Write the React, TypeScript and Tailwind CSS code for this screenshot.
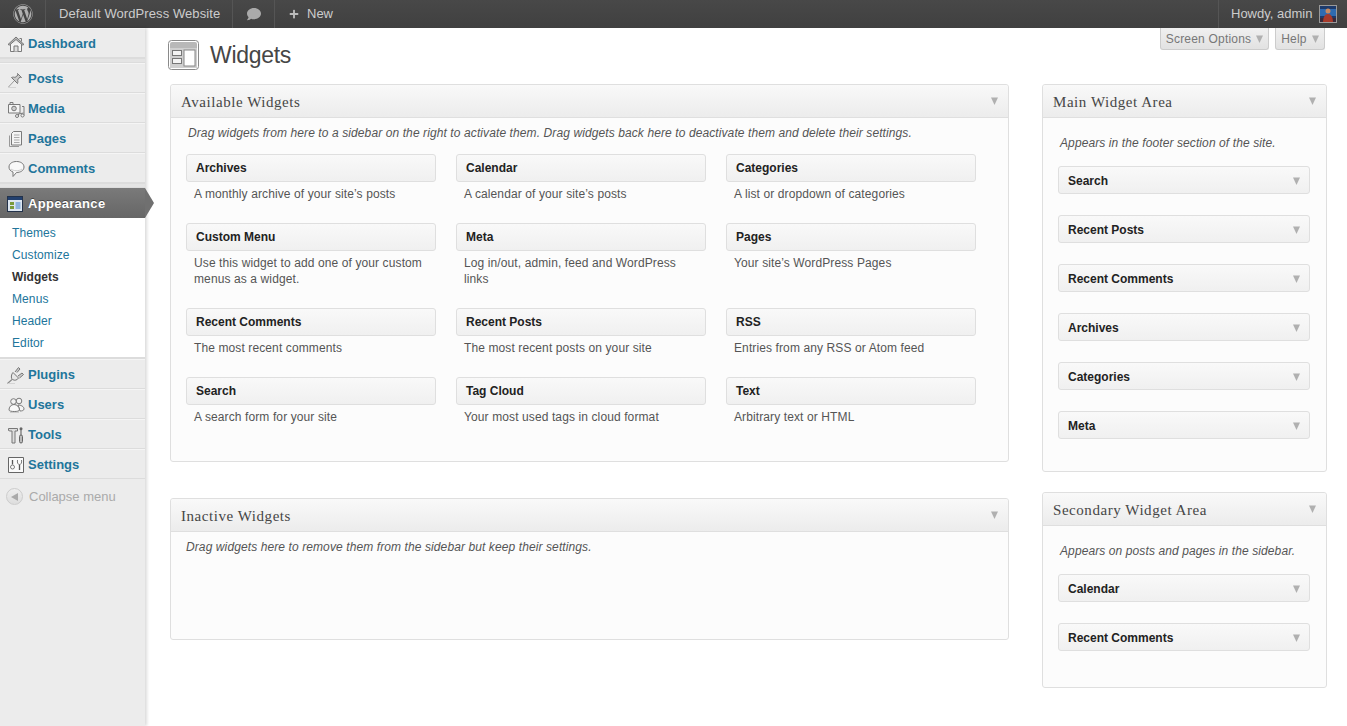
import React from "react";
import { FaWordpress, FaComment, FaPlus } from "react-icons/fa";

const S = { fill: "none", stroke: "#7a7a7a", strokeWidth: 1 } as const;
const F = { fill: "#f4f4f4", stroke: "#7a7a7a", strokeWidth: 1 } as const;
const Icon = ({ children }: { children: React.ReactNode }) => (
  <svg width="18" height="18" viewBox="0 0 18 18" className="shrink-0">{children}</svg>
);
const icons: Record<string, React.ReactNode> = {
  Dashboard: (<Icon>
    <path d="M3.500 8.500v8h11v-8" {...F} />
    <path d="M1 9.500 9 2l8 7.500-1.500 .5L9 4.500 2.500 10z" fill="#b5b5b5" stroke="#777" />
    <path d="M12.500 3.500h2v3" {...S} />
    <path d="M7 16.500V11h4v5.500" fill="#ddd" stroke="#777" />
  </Icon>),
  Posts: (<Icon>
    <path d="M1.500 17 7.500 10.500" stroke="#999" fill="none" />
    <path d="M4.500 7.500l6 6c.5-1.500.5-2.500 0-3.500l2.500-3 1.500.5-4-4 .5 1.500-3 2.500c-1-.5-2-.5-3.500 0z" fill="#c8c8c8" stroke="#777" />
    <path d="M1 17.500h8" stroke="#d4d4d4" fill="none" />
  </Icon>),
  Media: (<Icon>
    <path d="M1.500 4.500h11.500v8.500H1.500z" {...F} />
    <path d="M3 4.500v-2h3v2" {...S} />
    <circle cx="7" cy="8.500" r="2.300" fill="#ccc" stroke="#777" />
    <path d="M15 6.500h2v9M11.500 17v-3l5-1" {...S} />
    <circle cx="10" cy="16" r="1.500" {...F} />
    <circle cx="15.500" cy="15.500" r="1.500" {...F} />
  </Icon>),
  Pages: (<Icon>
    <path d="M2.500 5.500v11h9.500" fill="none" stroke="#999" />
    <path d="M4.500 3.500v11.500h10V1.500H6.500z" {...F} />
    <path d="M7 5h5.500M7 7.500h5.500M7 10h5.500M7 12.500h5.500" stroke="#aaa" fill="none" />
  </Icon>),
  Comments: (<Icon>
    <path d="M9.500 1.500c4 0 7.500 2 7.500 5.500s-3.500 5.500-7.500 5.500L6 16.500V12C3.500 11 2 9.500 2 7c0-3.500 3.500-5.500 7.500-5.500z" fill="#f8f8f8" stroke="#777" />
    <path d="M4 9c2 2 8 2.500 11 0" stroke="#ccc" fill="none" />
  </Icon>),
  Plugins: (<Icon>
    <path d="M.5 17.500l4.500-4" stroke="#888" fill="none" strokeWidth="1.200" />
    <path d="M6 6.500l5.500 5.500c-1 2-4 3-6 1.500S4.500 8 6 6.500z" fill="#e8e8e8" stroke="#777" />
    <path d="M8 6l3.500-4.500 1.500 1.500-3 3.500M11 10l4-3 1.500 1.500-4 3.500" fill="#ccc" stroke="#777" />
    <path d="M1 17.500h7" stroke="#d4d4d4" fill="none" />
  </Icon>),
  Users: (<Icon>
    <circle cx="6.500" cy="5.500" r="2.800" {...F} />
    <circle cx="12" cy="5" r="2.800" {...F} />
    <path d="M11 9c3 0 6 1.500 6 4 0 1.500-2 2-4 2z" {...F} />
    <path d="M2 14c0-3 2-5.500 5-5.500s5.500 2.500 5.500 5.500c0 2-10.500 2-10.500 0z" fill="#fafafa" stroke="#777" />
    <path d="M3 16.500h9" stroke="#ccc" fill="none" />
  </Icon>),
  Tools: (<Icon>
    <path d="M1.500 2.500h9v2.500h-2.500v12h-3V5H3L1.500 4.500z" fill="#ddd" stroke="#777" />
    <rect x="12.500" y="9" width="3" height="8" rx="1.500" fill="#bbb" stroke="#666" />
    <path d="M14 9V4" stroke="#777" strokeWidth="1.300" fill="none" />
    <circle cx="14" cy="2.800" r="1.500" fill="#666" />
  </Icon>),
  Settings: (<Icon>
    <path d="M1.500 1.500h15v15h-15z" fill="#fafafa" stroke="#666" />
    <path d="M5.500 4v4.500M12.500 8.500v5.500" stroke="#555" strokeWidth="1.300" fill="none" />
    <circle cx="5.500" cy="11" r="2" {...S} />
    <path d="M10.500 4c-.5 3 .5 4.500 2 4.500s2.500-1.500 2-4.500" {...S} />
  </Icon>),
};

const Caret = ({ className = "" }: { className?: string }) => (
  <svg width="7" height="8" viewBox="0 0 7 8" className={`shrink-0 ${className}`}>
    <path d="M0 .5h7L3.500 8z" fill="#b0b0b0" />
  </svg>
);

const MenuRow = ({ name }: { name: string }) => (
  <a className="flex h-[30px] items-center gap-[3px] border-t border-t-[#f5f5f5] border-b border-b-[#dcdcdc] pl-[7px] pt-[2px] text-[13px] font-bold text-[#21759b]">
    {icons[name]}
    <span>{name}</span>
  </a>
);

const MenuSep = () => <div className="h-[5px] border-y border-[#dcdcdc] bg-[#e4e4e4]" />;

const SideNav = () => (
  <aside className="w-[145px] shrink-0 bg-[#ececec] shadow-[2px_0_3px_rgba(0,0,0,0.14)]">
    <MenuRow name="Dashboard" />
    <MenuSep />
    {["Posts", "Media", "Pages", "Comments"].map((n) => <MenuRow key={n} name={n} />)}
    <MenuSep />
    <div className="relative flex h-[30px] items-center gap-[5px] bg-gradient-to-b from-[#7a7a7a] to-[#666] pl-[7px] pt-[2px] text-[13px] font-bold tracking-[0.3px] text-white [text-shadow:0_-1px_0_rgba(0,0,0,0.4)]">
      <svg width="16" height="16" viewBox="0 0 16 16" className="shrink-0">
        <rect x=".5" y=".5" width="15" height="15" fill="#dde6f0" stroke="#23324a" />
        <rect x="1" y="1" width="14" height="3" fill="#23406e" />
        <rect x="3" y="6" width="4" height="3" fill="#7a9a3a" />
        <rect x="3" y="10" width="4" height="3" fill="#7a9a3a" />
        <rect x="8.500" y="6" width="5" height="7" fill="#8fb3dd" />
      </svg>
      <span>Appearance</span>
      <div className="absolute left-full top-0 h-[30px] w-[9px] bg-[#707070] [clip-path:polygon(0_0,100%_50%,0_100%)]" />
    </div>
    <div className="h-[140px] border-b border-[#dcdcdc] bg-white pt-[4px] text-[12px] leading-[22px] tracking-[0.1px] text-[#21759b]">
      {["Themes", "Customize", "Widgets", "Menus", "Header", "Editor"].map((n) => (
        <div key={n} className={`pl-[12px] ${n === "Widgets" ? "font-bold tracking-normal text-[#333]" : ""}`}>{n}</div>
      ))}
    </div>
    <div className="border-t border-[#dcdcdc]">
      {["Plugins", "Users", "Tools", "Settings"].map((n) => <MenuRow key={n} name={n} />)}
    </div>
    <div className="mt-[8px] flex items-center gap-[6px] pl-[6px] text-[13px] text-[#aaa]">
      <span className="flex h-[17px] w-[17px] items-center justify-center rounded-full border border-[#ccc] bg-gradient-to-b from-[#eee] to-[#ddd]">
        <svg width="7" height="8" viewBox="0 0 7 8"><path d="M7 0v8L0 4z" fill="#aaa" /></svg>
      </span>
      <span>Collapse menu</span>
    </div>
  </aside>
);

const TopBar = () => (
  <header className="flex h-[28px] items-center bg-gradient-to-b from-[#484848] to-[#404040] text-[13px] text-[#cccccc]">
    <div className="flex h-full w-[46px] items-center justify-center border-r border-[#555]">
      <FaWordpress size={20} color="#b0b0b0" />
    </div>
    <div className="flex h-full w-[187px] items-center border-r border-[#555] pl-[13px] tracking-[0.08px]">Default WordPress Website</div>
    <div className="flex h-full w-[42px] items-center justify-center border-r border-[#555]">
      <FaComment size={14} color="#aaa" />
    </div>
    <div className="flex h-full items-center gap-[8px] pl-[14px]">
      <FaPlus size={10} color="#bbb" />
      <span>New</span>
    </div>
    <div className="ml-auto flex h-full w-[129px] items-center gap-[6px] border-l border-[#555] pl-[12px]">
      <span>Howdy, admin</span>
      <svg width="18" height="18" viewBox="0 0 18 18" className="ml-[1px] shrink-0">
        <rect width="18" height="18" fill="#1d3a6b" />
        <rect y="4" width="18" height="7" fill="#2f6bb0" />
        <rect y="13" width="18" height="5" fill="#3a2a3a" />
        <circle cx="9" cy="6" r="2.500" fill="#c98a60" />
        <path d="M4 18c0-6 2-9 5-9s5 3 5 9z" fill="#a83a2a" />
        <rect x=".5" y=".5" width="17" height="17" fill="none" stroke="#999" />
      </svg>
    </div>
  </header>
);

const Tab = ({ label, w }: { label: string; w: string }) => (
  <div className={`flex h-[22px] ${w} items-center justify-center gap-[5px] rounded-b-[3px] border border-t-0 border-[#ccc] bg-gradient-to-b from-[#f0f0f0] to-[#e2e2e2] text-[12px] tracking-[0.2px] text-[#777]`}>
    <span>{label}</span>
    <Caret />
  </div>
);

const PanelHead = ({ title, px }: { title: string; px: string }) => (
  <div className={`flex h-[33px] items-center justify-between rounded-t-[3px] border-b border-[#dfdfdf] bg-gradient-to-b from-[#f9f9f9] to-[#ececec] ${px} font-['Liberation_Serif',serif] text-[15px] tracking-[0.55px] text-[#464646]`}>
    <span className="pt-[2px]">{title}</span>
    <Caret />
  </div>
);

const Desc = ({ children, className }: { children: React.ReactNode; className: string }) => (
  <p className={`text-[12px] italic leading-[16px] tracking-[0.1px] text-[#555] ${className}`}>{children}</p>
);

const available = [
  ["Archives", "A monthly archive of your site\u2019s posts"],
  ["Calendar", "A calendar of your site\u2019s posts"],
  ["Categories", "A list or dropdown of categories"],
  ["Custom Menu", "Use this widget to add one of your custom menus as a widget."],
  ["Meta", "Log in/out, admin, feed and WordPress links"],
  ["Pages", "Your site\u2019s WordPress Pages"],
  ["Recent Comments", "The most recent comments"],
  ["Recent Posts", "The most recent posts on your site"],
  ["RSS", "Entries from any RSS or Atom feed"],
  ["Search", "A search form for your site"],
  ["Tag Cloud", "Your most used tags in cloud format"],
  ["Text", "Arbitrary text or HTML"],
];

const WidgetBar = ({ title, caret }: { title: string; caret?: boolean }) => (
  <div className={`flex h-[28px] items-center justify-between rounded-[3px] border border-[#dfdfdf] bg-gradient-to-b from-[#f9f9f9] to-[#f0f0f0] pl-[9px] pr-[9px] text-[12px] font-bold text-[#222] ${caret ? "pt-[2px]" : ""}`}>
    <span>{title}</span>
    {caret && <Caret />}
  </div>
);

const Sidebar = ({ title, desc, items, className }: { title: string; desc: string; items: string[]; className: string }) => (
  <section className={`rounded-[3px] border border-[#dfdfdf] bg-[#fcfcfc] ${className}`}>
    <PanelHead title={title} px="pl-[10px] pr-[10px]" />
    <Desc className="pl-[17px] pt-[17px]">{desc}</Desc>
    <div className="flex flex-col gap-[21px] pl-[15px] pr-[16px] pt-[15px]">
      {items.map((t) => <WidgetBar key={t} title={t} caret />)}
    </div>
  </section>
);

export default function App() {
  return (
    <div className="flex min-h-[726px] flex-col overflow-hidden bg-white font-['Liberation_Sans',Arial,sans-serif]">
      <TopBar />
      <div className="flex flex-1">
        <SideNav />
        <main className="min-w-0 flex-1 pl-[25px] pr-[20px]">
          <div className="flex h-[56px] items-start justify-between">
            <div className="ml-[-2px] mt-[12px] flex items-center gap-[10px]">
              <svg width="32" height="32" viewBox="0 0 32 32" className="shrink-0">
                <rect x=".5" y=".5" width="30" height="29" rx="3" fill="#fff" stroke="#8a8a8a" />
                <path d="M2 8V4Q2 2 4 2h23Q29 2 29 4v4z" fill="#b8b8b8" />
                <rect x="2" y="8" width="27" height="20" fill="#cfcfcf" />
                <rect x="4.500" y="10.500" width="9" height="5" fill="#f4f4f4" stroke="#777" />
                <rect x="4.500" y="18.500" width="9" height="5" fill="#f4f4f4" stroke="#777" />
                <rect x="16" y="10" width="11" height="16" fill="#fff" stroke="#888" />
              </svg>
              <h1 className="mt-[-2px] text-[23px] leading-[29px] tracking-[-0.3px] text-[#464646]">Widgets</h1>
            </div>
            <div className="mr-[2px] flex gap-[6px]">
              <Tab label="Screen Options" w="w-[109px]" />
              <Tab label="Help" w="w-[50px]" />
            </div>
          </div>
          <div className="flex items-start gap-[33px]">
            <div className="flex w-[839px] shrink-0 flex-col gap-[36px]">
              <section className="rounded-[3px] border border-[#dfdfdf] bg-[#fcfcfc]">
                <PanelHead title="Available Widgets" px="pl-[10px] pr-[10px]" />
                <Desc className="pl-[17px] pt-[7px]">Drag widgets from here to a sidebar on the right to activate them. Drag widgets back here to deactivate them and delete their settings.</Desc>
                <div className="grid grid-cols-[250px_250px_250px] gap-x-[20px] pb-[15px] pl-[15px] pt-[13px]">
                  {available.map(([t, d]) => (
                    <div key={t} className="pb-[21px]">
                      <WidgetBar title={t} />
                      <p className="mt-[4px] pl-[8px] pr-[10px] text-[12px] leading-[16px] tracking-[0.11px] text-[#555]">{d}</p>
                    </div>
                  ))}
                </div>
              </section>
              <section className="h-[142px] rounded-[3px] border border-[#dfdfdf] bg-[#fcfcfc]">
                <PanelHead title="Inactive Widgets" px="pl-[10px] pr-[10px]" />
                <Desc className="pl-[15px] pt-[7px]">Drag widgets here to remove them from the sidebar but keep their settings.</Desc>
              </section>
            </div>
            <div className="flex w-[285px] shrink-0 flex-col gap-[20px]">
              <Sidebar title="Main Widget Area" desc="Appears in the footer section of the site." items={["Search", "Recent Posts", "Recent Comments", "Archives", "Categories", "Meta"]} className="h-[388px]" />
              <Sidebar title="Secondary Widget Area" desc="Appears on posts and pages in the sidebar." items={["Calendar", "Recent Comments"]} className="h-[196px]" />
            </div>
          </div>
        </main>
      </div>
    </div>
  );
}
